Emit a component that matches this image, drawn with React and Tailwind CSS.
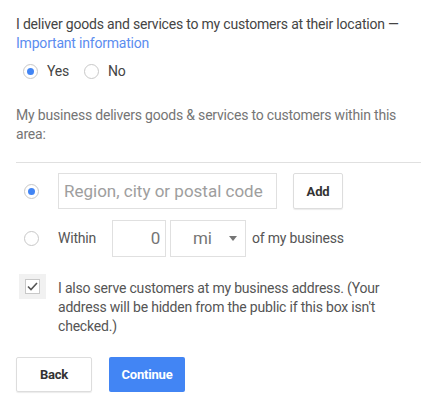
export default function App() {
  return (
    <div className="w-[427px] h-[400px] bg-white px-4 pt-[15px] text-[14px] leading-[19px] tracking-[-0.2px] text-[#444]" style={{ fontFamily: "Roboto, 'Liberation Sans', sans-serif" }}>

      {/* Question */}
      <p className="whitespace-nowrap">
        I deliver goods and services to my customers at their location —
        <br />
        <span className="text-[#5b8def]">Important information</span>
      </p>

      <div className="mt-[6px] h-6 flex items-center pl-[7px]">
        <span className="w-[15px] h-[15px] rounded-full border border-[#c8c8c8] flex items-center justify-center">
          <span className="w-[7px] h-[7px] rounded-full bg-[#4285f4]" />
        </span>
        <span className="ml-[9px] text-[#444]">Yes</span>
        <span className="ml-[15px] w-[15px] h-[15px] rounded-full border border-[#c8c8c8]" />
        <span className="ml-[9px] text-[#444]">No</span>
      </div>

      <p className="mt-[23px] text-[#757575]">
        My business delivers goods &amp; services to customers within this area:
      </p>

      <div className="mt-[18px] h-px w-[405px] bg-[#e0e0e0]" />

      {/* Region row */}
      <div className="mt-[10px] flex items-center">
        <span className="ml-[8px] w-[15px] h-[15px] rounded-full border border-[#c8c8c8] flex items-center justify-center">
          <span className="w-[7px] h-[7px] rounded-full bg-[#4285f4]" />
        </span>
        <div className="ml-[19px] w-[219px] h-9 border border-[#e0e0e0] flex items-center px-[5px] text-[17px] tracking-normal text-[#9e9e9e]">
          Region, city or postal code
        </div>
        <button className="ml-4 w-[50px] h-9 border border-[#ddd] rounded-[2px] shadow-[0_1px_1px_rgba(0,0,0,0.08)] text-[13px] font-bold text-[#333]">
          Add
        </button>
      </div>

      {/* Within row */}
      <div className="mt-[11px] flex items-center">
        <span className="ml-[8px] w-[15px] h-[15px] rounded-full border border-[#c8c8c8]" />
        <span className="ml-[19px] text-[#555]">Within</span>
        <div className="ml-[16px] w-[54px] h-[37px] border border-[#e0e0e0] flex items-center justify-end pr-[5px] text-[17px] text-[#757575]">
          0
        </div>
        <div className="ml-[4px] w-[76px] h-[37px] border border-[#e0e0e0] flex items-center pl-[22px] pr-[8px] text-[17px] text-[#757575]">
          <span className="flex-1">mi</span>
          <svg width="8" height="5" viewBox="0 0 8 5"><path d="M0 0h8L4 5z" fill="#757575" /></svg>
        </div>
        <span className="ml-[6px] text-[#555]">of my business</span>
      </div>

      {/* Checkbox */}
      <div className="mt-[17px] flex items-start">
        <div className="ml-[3px] w-[27px] h-[25px] bg-[#f1f1f1] flex items-center justify-center shrink-0">
          <span className="w-[15px] h-[15px] border border-[#c8c8c8] bg-white flex items-center justify-center">
            <svg width="11" height="9" viewBox="0 0 11 9"><path d="M1 4.5l3 3L10 1" fill="none" stroke="#555" strokeWidth="1.6" /></svg>
          </span>
        </div>
        <p className="ml-[12px] mt-[5px] w-[332px] text-[#555]">
          I also serve customers at my business address. (Your address will be hidden from the public if this box isn't checked.)
        </p>
      </div>

      {/* Actions */}
      <div className="mt-[21px] flex gap-[17px]">
        <button className="w-[76px] h-[35px] border border-[#ddd] rounded-[2px] shadow-[0_1px_1px_rgba(0,0,0,0.08)] text-[13px] font-bold text-[#333]">
          Back
        </button>
        <button className="w-[76px] h-[35px] bg-[#4285f4] rounded-[2px] text-[13px] font-bold text-white">
          Continue
        </button>
      </div>

    </div>
  );
}
